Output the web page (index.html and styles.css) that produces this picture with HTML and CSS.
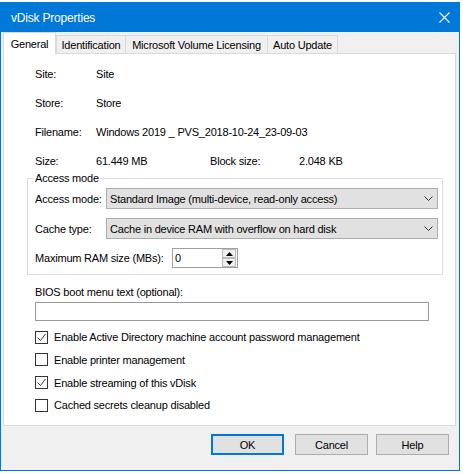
FILE: index.html
```html
<!DOCTYPE html>
<html lang="en">
<head>
    <meta charset="UTF-8">
    <title>vDisk Properties</title>
    <link rel="stylesheet" href="styles.css">
</head>
<body>
    <div class="window">
        <div class="titlebar">
            <span class="title">vDisk Properties</span>
            <svg class="close" width="11" height="11" viewBox="0 0 11 11">
                <path d="M0.5 0.5 L10.5 10.5 M10.5 0.5 L0.5 10.5" stroke="#fff" stroke-width="1.1" fill="none"/>
            </svg>
        </div>

        <div class="tabs">
            <div class="tab active tab-general">General</div>
            <div class="tab tab-ident">Identification</div>
            <div class="tab tab-mvl">Microsoft Volume Licensing</div>
            <div class="tab tab-auto">Auto Update</div>
        </div>

        <div class="panel">
            <div class="info">
                <div class="info-row"><span class="info-label">Site:</span><span>Site</span></div>
                <div class="info-row"><span class="info-label">Store:</span><span>Store</span></div>
                <div class="info-row"><span class="info-label">Filename:</span><span>Windows 2019 _ PVS_2018-10-24_23-09-03</span></div>
                <div class="info-row">
                    <span class="info-label">Size:</span>
                    <span class="size-value">61.449 MB</span>
                    <span class="block-label">Block size:</span>
                    <span>2.048 KB</span>
                </div>
            </div>

            <fieldset class="group">
                <legend>Access mode</legend>
                <div class="field-row">
                    <span class="field-label">Access mode:</span>
                    <div class="combo">
                        <span>Standard Image (multi-device, read-only access)</span>
                        <svg class="chevron" width="9" height="5" viewBox="0 0 9 5"><path d="M0.5 0.5 L4.5 4.5 L8.5 0.5" stroke="#333" fill="none"/></svg>
                    </div>
                </div>
                <div class="field-row">
                    <span class="field-label">Cache type:</span>
                    <div class="combo">
                        <span>Cache in device RAM with overflow on hard disk</span>
                        <svg class="chevron" width="9" height="5" viewBox="0 0 9 5"><path d="M0.5 0.5 L4.5 4.5 L8.5 0.5" stroke="#333" fill="none"/></svg>
                    </div>
                </div>
                <div class="field-row ram-row">
                    <span class="ram-label">Maximum RAM size (MBs):</span>
                    <div class="spin">
                        <span class="spin-value">0</span>
                        <div class="spin-buttons">
                            <span class="spin-btn"><svg width="7" height="4" viewBox="0 0 7 4"><path d="M3.5 0 L7 4 L0 4 Z" fill="#000"/></svg></span>
                            <span class="spin-btn"><svg width="7" height="4" viewBox="0 0 7 4"><path d="M0 0 L7 0 L3.5 4 Z" fill="#000"/></svg></span>
                        </div>
                    </div>
                </div>
            </fieldset>

            <div class="bios">
                <div class="bios-label">BIOS boot menu text (optional):</div>
                <div class="textbox"></div>
            </div>

            <ul class="checks">
                <li><span class="box checked"><svg width="11" height="11" viewBox="0 0 11 11"><path d="M1.5 5.5 L4.5 8.5 L9.5 2" stroke="#333" fill="none"/></svg></span>Enable Active Directory machine account password management</li>
                <li><span class="box"></span>Enable printer management</li>
                <li><span class="box checked"><svg width="11" height="11" viewBox="0 0 11 11"><path d="M1.5 5.5 L4.5 8.5 L9.5 2" stroke="#333" fill="none"/></svg></span>Enable streaming of this vDisk</li>
                <li><span class="box"></span>Cached secrets cleanup disabled</li>
            </ul>
        </div>

        <div class="buttons">
            <button class="btn btn-default">OK</button>
            <button class="btn btn-cancel">Cancel</button>
            <button class="btn">Help</button>
        </div>
    </div>
</body>
</html>
```

FILE: styles.css
```css
body {
    margin: 0;
    background: #fff;
    font-family: "Liberation Sans", Arial, sans-serif;
    font-size: 11px;
    letter-spacing: -0.2px;
    color: #000;
}

.window {
    width: 460px;
    height: 469px;
    margin-top: 2px;
    border: 1px solid #0078d7;
    box-sizing: border-box;
    background: #f0f0f0;
    display: flex;
    flex-direction: column;
}

/* title bar */
.titlebar {
    flex: none;
    height: 29px;
    background: #0078d7;
    color: #fff;
    font-size: 12px;
    display: flex;
    align-items: center;
    justify-content: space-between;
    padding: 0 9px 0 10px;
}

.close {
    display: block;
}

/* tabs */
.tabs {
    flex: none;
    height: 21px;
    display: flex;
    align-items: flex-end;
    padding-left: 2px;
    position: relative;
    z-index: 1;
}

.tab {
    height: 18px;
    box-sizing: border-box;
    border: 1px solid #d9d9d9;
    border-bottom: none;
    background: #f0f0f0;
    display: flex;
    align-items: center;
    justify-content: center;
    margin-right: -1px;
    padding-top: 1px;
}

.tab.active {
    height: 22px;
    margin-bottom: -1px;
    margin-right: 0;
    background: #fff;
    padding-top: 0;
}

.tab-general { width: 53px; }
.tab-ident { width: 70px; }
.tab-mvl { width: 143px; }
.tab-auto { width: 71px; }

/* tab page */
.panel {
    flex: none;
    height: 373px;
    margin: 0 3px 0 2px;
    border: 1px solid #d9d9d9;
    box-sizing: border-box;
    background: #fff;
    padding-top: 14px;
}

.info {
    display: flex;
    flex-direction: column;
    gap: 16px;
    padding-left: 31px;
}

.info-row {
    display: flex;
    line-height: 13px;
}

.info-label {
    width: 61px;
}

.size-value {
    width: 114px;
}

.block-label {
    width: 89px;
}

/* access mode group */
.group {
    width: 416px;
    min-width: 0;
    box-sizing: border-box;
    margin: 4px 0 0 23px;
    border: 1px solid #dcdcdc;
    padding: 3px 0 6px 7px;
}

.group legend {
    padding: 0 1px;
    margin-left: -1px;
    line-height: 13px;
}

.field-row {
    display: flex;
    align-items: center;
    height: 21px;
}

.field-row + .field-row {
    margin-top: 9px;
}

.field-label {
    width: 71px;
}

.combo {
    width: 332px;
    height: 21px;
    box-sizing: border-box;
    border: 1px solid #adadad;
    background: #e1e1e1;
    display: flex;
    align-items: center;
    justify-content: space-between;
    padding: 0 4px 0 3px;
}

.chevron {
    display: block;
}

.ram-row {
    height: 20px;
}

.ram-label {
    width: 137px;
}

.spin {
    width: 66px;
    height: 20px;
    box-sizing: border-box;
    border: 1px solid #a0a0a0;
    background: #fff;
    display: flex;
    align-items: center;
    justify-content: space-between;
    padding: 0 1px 0 2px;
}

.spin-buttons {
    display: flex;
    flex-direction: column;
}

.spin-btn {
    width: 14px;
    height: 9px;
    box-sizing: border-box;
    border: 1px solid #bcbcbc;
    background: #f0f0f0;
    display: flex;
    align-items: center;
    justify-content: center;
}

.spin-btn svg {
    display: block;
}

/* bios text */
.bios {
    padding-left: 31px;
}

.bios-label {
    margin-top: 11px;
    line-height: 13px;
}

.textbox {
    width: 394px;
    height: 19px;
    box-sizing: border-box;
    border: 1px solid #9a9a9a;
    margin-top: 3px;
    background: #fff;
}

/* checkboxes */
.checks {
    list-style: none;
    margin: 5px 0 0;
    padding: 0 0 0 31px;
}

.checks li {
    height: 22.67px;
    display: flex;
    align-items: center;
}

.box {
    width: 13px;
    height: 13px;
    box-sizing: border-box;
    border: 1px solid #333;
    background: #fff;
    margin-right: 6px;
    display: flex;
    align-items: center;
    justify-content: center;
}

.box svg {
    display: block;
}

/* dialog buttons */
.buttons {
    display: flex;
    justify-content: flex-end;
    margin-top: 8px;
    padding-right: 10px;
}

.btn {
    width: 73px;
    height: 21px;
    box-sizing: border-box;
    border: 1px solid #adadad;
    background: #e1e1e1;
    font-family: "Liberation Sans", Arial, sans-serif;
    font-size: 11px;
    letter-spacing: -0.2px;
    color: #000;
    padding: 0;
}

.btn-default {
    border: 2px solid #0078d7;
    margin-right: 11px;
}

.btn-cancel {
    margin-right: 8px;
}
```
